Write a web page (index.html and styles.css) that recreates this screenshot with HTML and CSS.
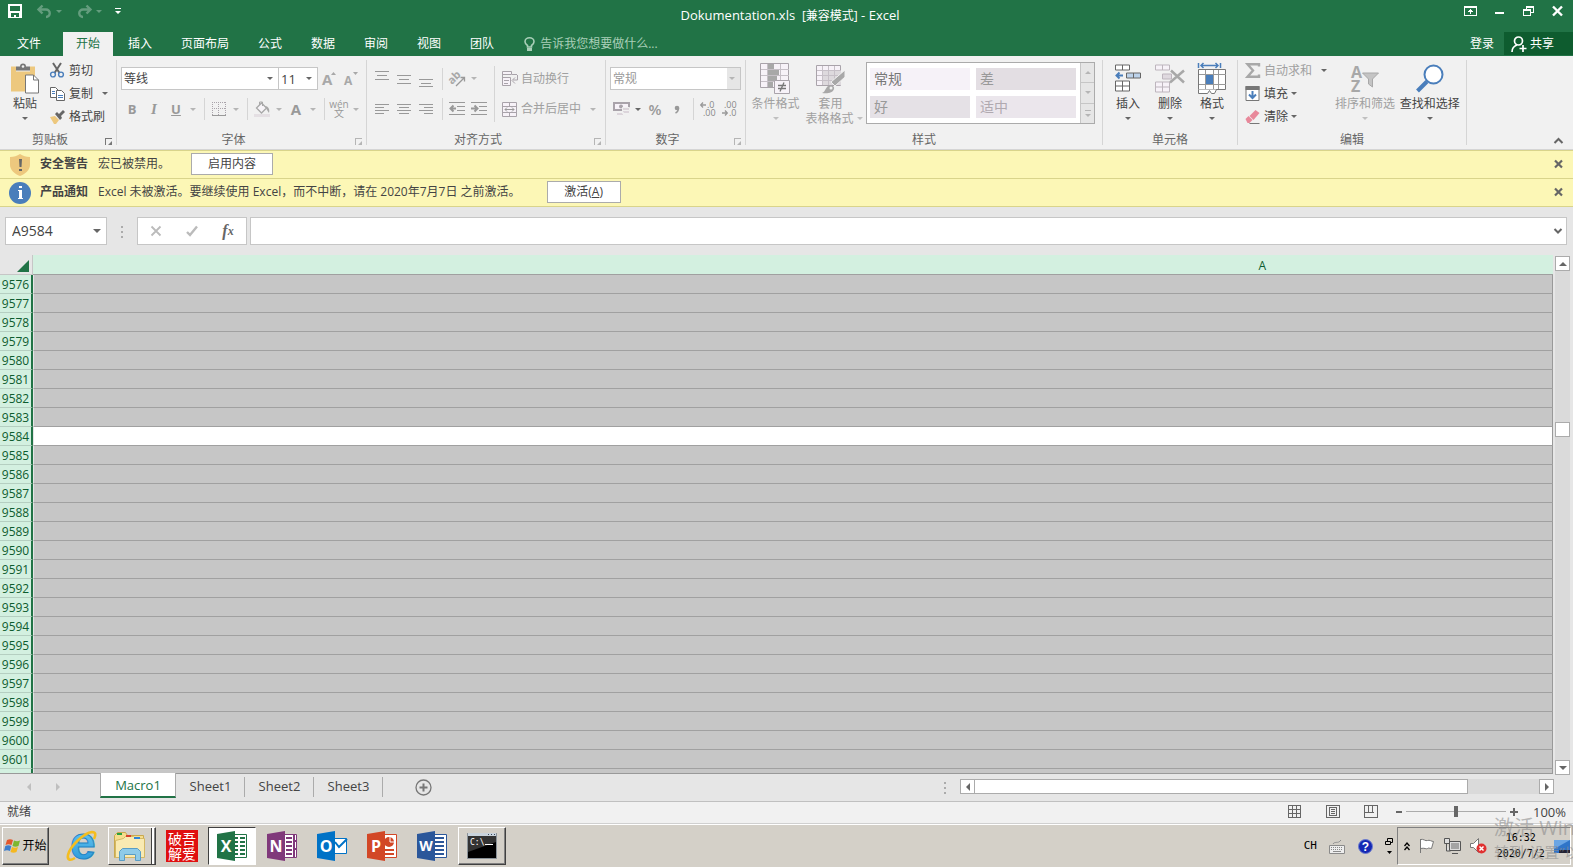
FILE: index.html
```
<!DOCTYPE html>
<html lang="zh-CN">
<head>
    <meta charset="UTF-8">
    <meta name="viewport" content="width=device-width, initial-scale=1.0">
    <title>Dokumentation.xls - Excel</title>
    <link rel="stylesheet" href="styles.css">
</head>
<body>

    <header class="title-bar">
        <div class="quick-access">
            <button class="qa-btn" aria-label="保存">
                <svg width="14" height="14" viewBox="0 0 14 14" shape-rendering="crispEdges"><path fill="#fff" fill-rule="evenodd" d="M0 0h14v14H0zM2 2v5h10V2zM3 9v4h3v-2h2v2h3V9z"/></svg>
            </button>
            <button class="qa-btn faded" aria-label="撤消">
                <svg width="15" height="13" viewBox="0 0 15 13"><path fill="none" stroke="#fff" stroke-width="2.400" d="M2 4.500h7a3.500 3.500 0 0 1 0 7.500M5.500 0.500L1.500 4.500l4 4"/></svg>
                <span class="arrow"></span>
            </button>
            <button class="qa-btn faded" aria-label="恢复">
                <svg width="15" height="13" viewBox="0 0 15 13"><path fill="none" stroke="#fff" stroke-width="2.400" d="M13 4.500H6a3.500 3.500 0 0 0 0 7.500M9.500 0.500l4 4-4 4"/></svg>
                <span class="arrow"></span>
            </button>
            <button class="qa-btn" aria-label="自定义快速访问工具栏">
                <svg width="6" height="6" viewBox="0 0 6 6"><path fill="#fff" d="M0 0h6v1H0zM0 3h6L3 6z"/></svg>
            </button>
        </div>
        <div class="doc-title">Dokumentation.xls&nbsp; <span>[兼容模式]</span> - Excel</div>
        <div class="window-buttons">
            <button aria-label="功能区显示选项"><svg width="13" height="10" viewBox="0 0 13 10" shape-rendering="crispEdges"><path fill="#fff" fill-rule="evenodd" d="M0 0h13v10H0zM1 2v7h11V2z"/><path fill="#fff" d="M6 3h1v5H6zM5 4h3v1H5zM4 5h5v1H4z"/></svg></button>
            <button aria-label="最小化"><svg width="13" height="10"><path fill="#fff" d="M2 6h9v2H2z"/></svg></button>
            <button aria-label="还原"><svg width="11" height="10" viewBox="0 0 11 10" shape-rendering="crispEdges"><path fill="#fff" fill-rule="evenodd" d="M3 0h8v7H8v3H0V3h3zM4 2v1h4v3h2V2zM1 5v4h6V5z"/></svg></button>
            <button aria-label="关闭"><svg width="11" height="10" viewBox="0 0 11 10"><path stroke="#fff" stroke-width="2.400" d="M1 0.500l9 9M10 0.500l-9 9"/></svg></button>
        </div>
    </header>

    <nav class="tabs">
        <button class="tab file">文件</button>
        <button class="tab active">开始</button>
        <button class="tab">插入</button>
        <button class="tab">页面布局</button>
        <button class="tab">公式</button>
        <button class="tab">数据</button>
        <button class="tab">审阅</button>
        <button class="tab">视图</button>
        <button class="tab">团队</button>
        <button class="tell-me">
            <svg width="11" height="15" viewBox="0 0 11 15"><path fill="none" stroke="#a9cfb8" stroke-width="1.600" d="M3.500 10V8.500C2 7.500 1 6.500 1 4.800a4.500 4 0 0 1 9 0C10 6.500 9 7.500 7.500 8.500V10z"/><path fill="#a9cfb8" d="M3 11h5v3H3z"/></svg>
            告诉我您想要做什么...
        </button>
        <button class="sign-in">登录</button>
        <button class="share">
            <svg width="16" height="16" viewBox="0 0 16 16"><g fill="none" stroke="#fff" stroke-width="1.700"><circle cx="7.500" cy="5" r="4"/><path d="M1 16c0-4 2-6 5-7M12 9v7M8.500 12.500h7"/></g></svg>
            共享
        </button>
    </nav>

    <section class="ribbon">
        <div class="group g-clip">
            <div class="group-body">
                <button class="big-btn paste">
                    <svg width="30" height="30" viewBox="0 0 30 30"><path fill="#edc87e" d="M1 3h24v25H1z"/><path fill="#f1f1f1" d="M6 2h14v6H6z"/><path fill="#777" d="M6 3h4a3 3 0 0 1 6 0h4v4H6z"/><circle cx="13" cy="3" r="1.300" fill="#f1f1f1"/><path fill="#fff" stroke="#777" d="M15.500 11.500h8l5 5v13h-13z"/><path fill="none" stroke="#777" d="M23.500 11.500v5h5"/></svg>
                    <span>粘贴</span><span class="arrow"></span>
                </button>
                <div class="stack">
                    <button class="row-btn"><svg width="15" height="15" viewBox="0 0 15 15"><path stroke="#666" stroke-width="2" d="M3 0l6.500 10M11 0L4.500 10"/><g fill="none" stroke="#4a7ebb" stroke-width="1.400"><circle cx="3" cy="11.500" r="2.400"/><circle cx="11" cy="11.500" r="2.400"/></g></svg>剪切</button>
                    <button class="row-btn"><svg width="15" height="14" viewBox="0 0 15 14"><g fill="#fff" stroke="#666"><path d="M.5.500h5l3 3v7h-8z"/><path d="M6.500 3.500h5l3 3v7h-8z"/></g><path stroke="#4a7ebb" d="M2 4.500h3M2 6.500h3M8 8.500h5M8 10.500h5"/></svg>复制<span class="arrow far"></span></button>
                    <button class="row-btn"><svg width="15" height="14" viewBox="0 0 15 14"><path fill="#edc87e" d="M0 7l5-1 4 4-3 4H4z"/><path fill="#666" d="M5 4l2-2 2 2 4-4 2 2-4 4 1 2-2 2z"/></svg>格式刷</button>
                </div>
            </div>
            <div class="group-label">剪贴板<span class="launcher dark"></span></div>
        </div>

        <div class="group g-font">
            <div class="group-body rows">
                <div class="tool-row">
                    <label class="combo font-name"><select aria-label="字体"><option>等线</option></select></label>
                    <label class="combo font-size"><select aria-label="字号"><option>11</option></select></label>
                    <button class="tool" aria-label="增大字号"><svg width="14" height="16" viewBox="0 0 14 16"><text x="0" y="14" class="glyph" font-size="15">A</text><path fill="#a8a8a8" d="M9 4l2.500-3L14 4z"/></svg></button>
                    <button class="tool" aria-label="减小字号"><svg width="14" height="16" viewBox="0 0 14 16"><text x="0" y="14" class="glyph" font-size="12">A</text><path fill="#a8a8a8" d="M9 1l2.500 3L14 1z"/></svg></button>
                </div>
                <div class="tool-row">
                    <button class="tool bold">B</button>
                    <button class="tool italic">I</button>
                    <button class="tool under">U</button>
                    <span class="arrow"></span>
                    <i class="sep"></i>
                    <button class="tool" aria-label="边框"><svg width="14" height="14" viewBox="0 0 14 14"><path fill="none" stroke="#a9a3aa" stroke-dasharray="1 1" d="M0 .5h14M0 6.500h14M.5 0v13M6.500 0v13M13.500 0v13"/><path stroke="#999" d="M0 13.500h14"/></svg></button>
                    <span class="arrow"></span>
                    <i class="sep"></i>
                    <button class="tool" aria-label="填充颜色"><svg width="16" height="16" viewBox="0 0 16 16"><path fill="#e4dfe3" d="M0 13h16v3H0z"/><path fill="#f7f4f8" stroke="#a8a8a8" stroke-width="1.300" d="M2.500 7l5-5 5 5-5 5z"/><path fill="none" stroke="#a8a8a8" d="M5.500 4V1h3v4"/><path fill="#a8a8a8" d="M11 5c3 0 5 3 4 7l-2-3z"/></svg></button>
                    <span class="arrow"></span>
                    <button class="tool letter">A</button>
                    <span class="arrow"></span>
                    <i class="sep"></i>
                    <button class="tool pinyin"><span>wén</span><span>文</span></button>
                    <span class="arrow"></span>
                </div>
            </div>
            <div class="group-label">字体<span class="launcher"></span></div>
        </div>

        <div class="group g-align">
            <div class="group-body">
                <div class="rows align-left">
                    <div class="tool-row">
                        <button class="tool" aria-label="顶端对齐"><svg width="14" height="16"><path stroke="#999" d="M0 .5h14M2 4.500h10M0 8.500h14" /></svg></button>
                        <button class="tool" aria-label="垂直居中"><svg width="14" height="16"><path stroke="#999" d="M0 4.500h14M2 8.500h10M0 12.500h14"/></svg></button>
                        <button class="tool" aria-label="底端对齐"><svg width="14" height="16"><path stroke="#999" d="M0 8.500h14M2 12.500h10M0 15.500h14"/></svg></button>
                        <i class="sep"></i>
                        <button class="tool" aria-label="方向"><svg width="17" height="16" viewBox="0 0 17 16"><text x="0" y="11" class="glyph" font-size="11" transform="rotate(-45 5 9)">ab</text><path fill="none" stroke="#999" stroke-width="1.300" d="M7 15l8-8M11.500 6.500h4v4"/></svg></button>
                        <span class="arrow"></span>
                    </div>
                    <div class="tool-row">
                        <button class="tool" aria-label="左对齐"><svg width="14" height="11"><path stroke="#999" d="M0 .5h14M0 3.500h9M0 6.500h14M0 9.500h9"/></svg></button>
                        <button class="tool" aria-label="居中"><svg width="14" height="11"><path stroke="#999" d="M0 .5h14M2 3.500h10M0 6.500h14M2 9.500h10"/></svg></button>
                        <button class="tool" aria-label="右对齐"><svg width="14" height="11"><path stroke="#999" d="M0 .5h14M5 3.500h9M0 6.500h14M5 9.500h9"/></svg></button>
                        <i class="sep"></i>
                        <button class="tool" aria-label="减少缩进"><svg width="16" height="14"><path stroke="#999" d="M0 .5h16M8 4.500h8M8 8.500h8M0 12.500h16"/><path stroke="#999" stroke-width="2" fill="none" d="M7 6.500H2M4.500 3.500l-3 3 3 3"/></svg></button>
                        <button class="tool" aria-label="增加缩进"><svg width="16" height="14"><path stroke="#999" d="M0 .5h16M8 4.500h8M8 8.500h8M0 12.500h16"/><path stroke="#999" stroke-width="2" fill="none" d="M0 6.500h5M3.500 3.500l3 3-3 3"/></svg></button>
                    </div>
                </div>
                <i class="sep long"></i>
                <div class="rows">
                    <div class="tool-row">
                        <button class="text-tool"><svg width="16" height="15" viewBox="0 0 16 15"><g fill="#f7f2f8" stroke="#a9a3aa"><path d="M.5.500h9v3h-9zM.5 6.500h8v8h-8z"/></g><path fill="none" stroke="#a9a3aa" d="M2 9.500h5M2 12.500h4M10 3.500h5M15.500 4v5H11M13 6.500l-3 3 3 3M.5 3v4"/></svg>自动换行</button>
                    </div>
                    <div class="tool-row">
                        <button class="text-tool"><svg width="16" height="15" viewBox="0 0 16 15"><g fill="#f7f2f8" stroke="#a9a3aa"><path d="M.5.500h14v14H.5zM.5 4.500h14v6H.5zM7.500 0.500v4M7.500 10.500v4"/></g><path fill="none" stroke="#999" d="M3 7.500h9M5 5.500l-2 2 2 2M10 5.500l2 2-2 2"/></svg>合并后居中</button>
                        <span class="arrow merge-arrow"></span>
                    </div>
                </div>
            </div>
            <div class="group-label">对齐方式<span class="launcher"></span></div>
        </div>

        <div class="group g-num">
            <div class="group-body rows">
                <div class="tool-row">
                    <label class="combo num-format"><select aria-label="数字格式" disabled><option>常规</option></select></label>
                </div>
                <div class="tool-row">
                    <button class="tool" aria-label="会计数字格式"><svg width="17" height="16" viewBox="0 0 17 16"><path fill="#f7f2f8" stroke="#a9a3aa" stroke-width="2" d="M1 2h15v7H1z"/><circle cx="8" cy="5.500" r="2" fill="#a9a3aa"/><path fill="#dcd5db" stroke="#f1f1f1" d="M9.500 6.500h7v3h-7zM9.500 9.500h7v3h-7zM3.500 11.500h7v3h-7z"/></svg></button>
                    <span class="arrow black"></span>
                    <button class="tool percent">%</button>
                    <button class="tool" aria-label="千位分隔样式"><svg width="6" height="9" viewBox="0 0 6 9"><circle cx="3" cy="3" r="2.300" fill="#999"/><path fill="none" stroke="#999" stroke-width="1.500" d="M4.500 3c0 3-1 4-3 5"/></svg></button>
                    <i class="sep"></i>
                    <button class="tool" aria-label="增加小数位数"><svg width="16" height="16" viewBox="0 0 16 16"><text x="7" y="7" class="digits">.0</text><text x="3" y="15" class="digits">.00</text><path fill="none" stroke="#999" stroke-width="1.300" d="M6 4H1M3 1.500L.7 4 3 6.500"/></svg></button>
                    <button class="tool" aria-label="减少小数位数"><svg width="16" height="16" viewBox="0 0 16 16"><text x="2" y="7" class="digits">.00</text><text x="7" y="15" class="digits">.0</text><path fill="none" stroke="#999" stroke-width="1.300" d="M0 12h5M3 9.500L5.300 12 3 14.500"/></svg></button>
                </div>
            </div>
            <div class="group-label">数字<span class="launcher"></span></div>
        </div>

        <div class="group g-style">
            <div class="group-body">
                <button class="big-btn off">
                    <svg width="31" height="31" viewBox="0 0 31 31"><path fill="#f7f2f8" stroke="#a9a3aa" d="M.5.500h28v24H.5z"/><path fill="#a8a8a8" d="M8 1h6v6H8zM8 7h11v6H8zM8 13h9v6H8zM8 19h5v5H8z"/><path stroke="#c6c0c7" d="M1 6.500h28M1 12.500h28M1 18.500h28M7.500 1v23M20.500 1v23"/><path fill="#f7f2f8" stroke="#a9a3aa" d="M14.500 17.500h15v13h-15z"/><path stroke="#777" stroke-width="1.300" d="M18 22.500h8M18 25.500h8M24 19.500l-4 9"/></svg>
                    <span>条件格式</span><span class="arrow"></span>
                </button>
                <button class="big-btn off">
                    <svg width="31" height="31" viewBox="0 0 31 31"><path fill="#f7f2f8" stroke="#a9a3aa" d="M1.500 2.500h24v20h-24z"/><path fill="#ddd9dd" d="M8 8h18v14H8z"/><path stroke="#c6c0c7" d="M2 7.500h24M2 12.500h24M2 17.500h24M7.500 3v19M13.500 3v19M19.500 3v19"/><path fill="#a8a8a8" stroke="#f1f1f1" d="M30 7v7L20 23l-4-4z"/><path fill="#a8a8a8" d="M7 30c3-1 3-4 6-7 3-2 7 0 6 3-1 4-7 5-12 4z"/><circle cx="16" cy="25" r="1.500" fill="#f1f1f1"/></svg>
                    <span>套用</span><span class="two-line">表格格式 <span class="arrow"></span></span>
                </button>
                <div class="gallery">
                    <div class="gallery-items">
                        <button class="style-normal">常规</button>
                        <button class="style-bad">差</button>
                        <button class="style-good">好</button>
                        <button class="style-neutral">适中</button>
                    </div>
                    <div class="gallery-nav">
                        <button aria-label="上一行"><span class="arrow up"></span></button>
                        <button aria-label="下一行"><span class="arrow"></span></button>
                        <button class="more" aria-label="其他"><span class="arrow"></span></button>
                    </div>
                </div>
            </div>
            <div class="group-label">样式</div>
        </div>

        <div class="group g-cells">
            <div class="group-body">
                <button class="big-btn">
                    <svg width="28" height="28" viewBox="0 0 28 28"><g fill="#fff" stroke="#666"><path d="M1.500.500h14v5h-14zM8.500 .5v5M1.500 16.500h14v10h-14zM1.500 21.500h14M8.500 16.500v10"/><path fill="#bcd2ea" d="M12.500 8.500h14v5h-14zM19.500 8.500v5"/></g><path fill="none" stroke="#4a7ebb" stroke-width="2" d="M9 11H3M5.500 8L2.500 11l3 3"/></svg>
                    <span>插入</span><span class="arrow"></span>
                </button>
                <button class="big-btn">
                    <svg width="30" height="28" viewBox="0 0 30 28"><g fill="#f7f2f8" stroke="#bdb5bd"><path d="M.5.500h14v5h-14zM7.500 .5v5M.5 17.500h14v10h-14zM.5 22.500h14M7.500 17.500v10"/><path fill="#dfd9df" d="M7.500 9.500h9v5h-9z"/></g><path stroke="#a8a8a8" stroke-width="2.500" d="M15 18L29 6M16 6l13 12"/></svg>
                    <span>删除</span><span class="arrow"></span>
                </button>
                <button class="big-btn">
                    <svg width="28" height="31" viewBox="0 0 28 31"><path fill="none" stroke="#4a7ebb" stroke-width="1.500" d="M.5 0v5M22.500 0v5M3 2.500h17M5.500 0L3 2.500 5.500 5M17.500 0L20 2.500 17.500 5"/><path fill="#fff" stroke="#777" d="M.5 6.500h27v20H.5z"/><path stroke="#999" d="M1 11.500h27M1 21.500h27M7.500 7v19M15.500 7v19M20.500 7v19"/><path fill="#4a7ebb" d="M8 12h7v9H8z"/><path fill="#fff" stroke="#777" d="M.5 26.500v4h9l2-3 2 3h3l2-4"/></svg>
                    <span>格式</span><span class="arrow"></span>
                </button>
            </div>
            <div class="group-label">单元格</div>
        </div>

        <div class="group g-edit">
            <div class="group-body">
                <div class="stack">
                    <button class="row-btn off"><svg width="15" height="15" viewBox="0 0 15 15"><path fill="none" stroke="#a8a8a8" stroke-width="2.400" d="M14 3.500V1.200H2.500L8 7.500l-5.500 6.300H14v-2.300"/></svg>自动求和<span class="arrow dim far"></span></button>
                    <button class="row-btn"><svg width="14" height="15" viewBox="0 0 14 15"><path fill="#fff" stroke="#777" d="M.5.500h13v14H.5z"/><path fill="#777" d="M0 0h14v4H0z"/><path fill="none" stroke="#4a7ebb" stroke-width="2" d="M7 5v7M3.500 8.500L7 12l3.500-3.500"/></svg>填充<span class="arrow"></span></button>
                    <button class="row-btn"><svg width="14" height="14" viewBox="0 0 14 14"><path fill="#e8889a" d="M4 6l6-6 4 3-6 7z"/><path fill="#e8889a" d="M0 9l3-3 4 4-3 3H2z"/><path stroke="#777" d="M4 13.500h10"/></svg>清除<span class="arrow"></span></button>
                </div>
                <button class="big-btn off wide">
                    <svg width="30" height="28" viewBox="0 0 30 28"><text x="1" y="13" class="glyph" font-size="16">A</text><text x="1" y="27" class="glyph" font-size="16">Z</text><path fill="#c4c4c4" stroke="#a8a8a8" d="M12.500 8.500h16l-6 6v8l-4-3v-5z"/></svg>
                    <span>排序和筛选</span><span class="arrow"></span>
                </button>
                <button class="big-btn wide">
                    <svg width="28" height="28" viewBox="0 0 28 28"><circle cx="17.500" cy="10" r="9" fill="#fff" stroke="#4a7ebb" stroke-width="2"/><path stroke="#4a7ebb" stroke-width="4" d="M1.500 26.500l9.500-9.500"/></svg>
                    <span>查找和选择</span><span class="arrow"></span>
                </button>
            </div>
            <div class="group-label">编辑</div>
        </div>
        <button class="collapse" aria-label="折叠功能区"><svg width="9" height="6"><path fill="none" stroke="#666" stroke-width="2" d="M.5 5l4-4 4 4"/></svg></button>
    </section>

    <div class="notice">
        <svg width="20" height="22" viewBox="0 0 20 22"><path fill="#edc87e" d="M10 0c3 2 6 3 10 3v8c0 5-5 9-10 11C5 20 0 16 0 11V3c4 0 7-1 10-3z"/><path fill="#666" d="M9 5h3l-.5 8h-2zM9 15h3v2H9z"/></svg>
        <strong>安全警告</strong>
        <span>宏已被禁用。</span>
        <button class="notice-btn enable">启用内容</button>
        <button class="notice-close" aria-label="关闭"><svg width="9" height="8"><path stroke="#666" stroke-width="2.200" d="M1 .5l7 7M8 .5l-7 7"/></svg></button>
    </div>
    <div class="notice">
        <svg width="22" height="22" viewBox="0 0 22 22"><circle cx="11" cy="11" r="11" fill="#4a7ebb"/><path fill="#fff" d="M10 4h3v2h-3zM9 8h4v8h1v1H9v-1h1V9H9z"/></svg>
        <strong>产品通知</strong>
        <span>Excel 未被激活。要继续使用 Excel，而不中断，请在 2020年7月7日 之前激活。</span>
        <button class="notice-btn">激活(<u>A</u>)</button>
        <button class="notice-close" aria-label="关闭"><svg width="9" height="8"><path stroke="#666" stroke-width="2.200" d="M1 .5l7 7M8 .5l-7 7"/></svg></button>
    </div>

    <div class="formula-bar">
        <label class="combo name-box"><input type="text" value="A9584" aria-label="名称框"></label>
        <i class="dots"></i>
        <div class="fx-box">
            <button aria-label="取消"><svg width="10" height="10"><path stroke="#bbb" stroke-width="1.800" d="M.5.500l9 9M9.500.500l-9 9"/></svg></button>
            <button aria-label="输入"><svg width="12" height="10"><path fill="none" stroke="#bbb" stroke-width="2.400" d="M1 6l3 3 7-8.500"/></svg></button>
            <button class="fx" aria-label="插入函数">f<sub>x</sub></button>
        </div>
        <div class="formula-input">
            <input type="text" aria-label="编辑栏">
            <svg width="8" height="6"><path fill="none" stroke="#666" stroke-width="2" d="M.5 1L4 4.500 7.500 1"/></svg>
        </div>
    </div>

    <main class="sheet">
        <div class="grid">
            <table>
                <thead>
                    <tr><th class="corner"><svg width="12" height="12"><path fill="#217346" d="M12 0v12H0z"/></svg></th><th class="col-head">A</th></tr>
                </thead>
                <tbody id="rows"></tbody>
            </table>
        </div>
        <div class="v-scroll">
            <button aria-label="向上"><span class="arrow up solid"></span></button>
            <div class="v-track"><div class="v-thumb"></div></div>
            <button aria-label="向下"><span class="arrow solid"></span></button>
        </div>
    </main>

    <div class="sheet-bar">
        <div class="sheet-nav"><span class="side prev"></span><span class="side next"></span></div>
        <button class="sheet-tab current">Macro1</button>
        <button class="sheet-tab">Sheet1</button>
        <button class="sheet-tab">Sheet2</button>
        <button class="sheet-tab">Sheet3</button>
        <button class="add-sheet" aria-label="新工作表"><svg width="17" height="17" viewBox="0 0 17 17"><circle cx="8.500" cy="8.500" r="7.500" fill="none" stroke="#777" stroke-width="1.300"/><path stroke="#777" stroke-width="2" d="M8.500 4.500v8M4.500 8.500h8"/></svg></button>
        <i class="dots"></i>
        <div class="h-scroll">
            <button aria-label="向左"><span class="side prev"></span></button>
            <div class="h-track"><div class="h-thumb"></div></div>
            <button aria-label="向右"><span class="side next"></span></button>
        </div>
    </div>

    <footer class="status-bar">
        <span class="ready">就绪</span>
        <button aria-label="普通"><svg width="14" height="14" shape-rendering="crispEdges"><path fill="none" stroke="#666" d="M.5.500h12v12H.5zM4.500.500v12M8.500.500v12M.5 4.500h12M.5 8.500h12"/></svg></button>
        <button aria-label="页面布局"><svg width="14" height="14" shape-rendering="crispEdges"><path fill="none" stroke="#666" d="M.5.500h13v12H.5zM3.500 2.500h7v8h-7zM5 4.500h4M5 6.500h4M5 8.500h4"/></svg></button>
        <button aria-label="分页预览"><svg width="14" height="14" shape-rendering="crispEdges"><path fill="none" stroke="#666" d="M.5.500h13v12H.5zM4.500.500v7M8.500.500v7M.5 7.500h9"/></svg></button>
        <div class="zoom">
            <span class="minus"></span>
            <input type="range" min="0" max="100" value="50" aria-label="显示比例">
            <span class="plus"></span>
        </div>
        <span class="percent-label">100%</span>
    </footer>

    <div class="taskbar">
        <button class="start">
            <svg width="17" height="16" viewBox="0 0 17 16"><path fill="#e2572c" d="M3 2c2-1 4-1 6 0L7.500 7c-2-1-4-1-6 0z"/><path fill="#7db72f" d="M10 2.500c2 1 4 1 6 0L14.500 8c-2 1-4 1-6 0z"/><path fill="#3d7ecc" d="M1.300 8c2-1 4-1 6 0L6 13c-2-1-4-1-6 0z"/><path fill="#f5b81f" d="M8 9c2 1 4 1 6 0l-1.500 5c-2 1-4 1-6 0z"/></svg>
            <span>开始</span>
        </button>
        <button class="task" aria-label="Internet Explorer">
            <svg width="32" height="32" viewBox="0 0 32 32"><defs><linearGradient id="ie" x2="0" y2="1"><stop offset="0" stop-color="#7fd6f8"/><stop offset="1" stop-color="#1b8fd6"/></linearGradient></defs><text x="4" y="29" class="ie-letter">e</text><path fill="none" stroke="#f4bd1f" stroke-width="2.600" d="M9 28c-5 3-8 2-7-3C4 16 18 3 26 2c4 0 4 3 2 7"/></svg>
        </button>
        <button class="task raised double" aria-label="文件资源管理器">
            <svg width="34" height="32" viewBox="0 0 34 32"><path fill="#f5dd8d" stroke="#c9a94e" d="M1.500 5.500l3-3h8l2 3h16v22h-29z"/><path fill="#f9eab2" stroke="#d4b864" d="M2.500 10.500l8-2 2-2h8l2 2h9v19h-29z"/><path fill="#29a03f" d="M4 3h5v2H4z"/><path fill="#d8402c" d="M13 5h5v2h-5z"/><path fill="#2f84d6" d="M21 7h6v2h-6z"/><path fill="#8ecbe9" stroke="#5a9dc4" d="M6.500 30.500v-9l3-3h15l3 3v9h-5v-6h-11v6z"/></svg>
        </button>
        <button class="task" aria-label="吾爱破解"><span class="seal">破吾解爱</span></button>
        <button class="task pressed" aria-label="Excel">
            <svg width="32" height="32" viewBox="0 0 32 32"><path fill="#fff" stroke="#217346" d="M15.500 4.500h15v23h-15z"/><path stroke="#217346" stroke-width="2" d="M18 8h4M24 8h5M18 12h4M24 12h5M18 16h4M24 16h5M18 20h4M24 20h5M18 24h4M24 24h5"/><path fill="#217346" d="M1 4l18-3v30L1 28z"/><text x="10" y="22" class="logo">X</text></svg>
        </button>
        <button class="task" aria-label="OneNote">
            <svg width="32" height="32" viewBox="0 0 32 32"><path fill="#fff" stroke="#80397b" d="M15.500 4.500h15v23h-15z"/><path stroke="#80397b" stroke-width="2" d="M20 8h6M20 12h6M20 16h6M20 20h6M20 24h6M28 5v22M28 11h3M28 19h3"/><path fill="#80397b" d="M1 4l18-3v30L1 28z"/><text x="10" y="22" class="logo">N</text></svg>
        </button>
        <button class="task" aria-label="Outlook">
            <svg width="32" height="32" viewBox="0 0 32 32"><path fill="#fff" stroke="#0072c6" d="M15.500 8.500h15v15h-15z"/><path fill="none" stroke="#0072c6" stroke-width="2" d="M19 12l4 5 8-8"/><path fill="#0072c6" d="M1 4l18-3v30L1 28z"/><text x="10" y="22" class="logo">O</text></svg>
        </button>
        <button class="task" aria-label="PowerPoint">
            <svg width="32" height="32" viewBox="0 0 32 32"><path fill="#fff" stroke="#d24726" d="M15.500 4.500h15v23h-15z"/><circle cx="23" cy="12" r="5" fill="#d24726"/><path stroke="#fff" fill="none" d="M24 7v5h5"/><path stroke="#d24726" stroke-width="2" d="M19 20h9M19 24h9"/><path fill="#d24726" d="M1 4l18-3v30L1 28z"/><text x="10" y="22" class="logo">P</text></svg>
        </button>
        <button class="task" aria-label="Word">
            <svg width="32" height="32" viewBox="0 0 32 32"><path fill="#fff" stroke="#2b579a" d="M15.500 4.500h15v23h-15z"/><path stroke="#2b579a" stroke-width="2" d="M19 8h9M19 12h9M19 16h9M19 20h9M19 24h9"/><path fill="#2b579a" d="M1 4l18-3v30L1 28z"/><text x="10" y="21" class="logo small">W</text></svg>
        </button>
        <button class="task raised" aria-label="命令提示符">
            <svg width="32" height="28" viewBox="0 0 32 28"><path fill="#000" stroke="#8a9299" d="M1.500 1.500h29v25h-29z"/><path fill="#c9d3dc" d="M2 1h28v3H2z"/><path fill="#39485a" d="M22 2h1v1h-1zM25 2h1v1h-1zM28 2h1v1h-1z"/><path fill="#333" d="M2 4h28v6L2 20z"/><text x="4" y="13" font-family="DejaVu Sans Mono" font-size="8" fill="#fff">C:\</text><path fill="#fff" d="M19 12h8v1h-8z"/></svg>
        </button>

        <div class="lang-bar">
            <span>CH</span>
            <svg width="17" height="15" viewBox="0 0 17 15"><path fill="#eee" stroke="#8a8a8a" d="M.5 6.500h15v8H.5zM4 5c2-3 5 0 8-4"/><path stroke="#8a8a8a" stroke-dasharray="1 1" d="M2 8.500h12M2 10.500h12"/><path stroke="#8a8a8a" d="M4 12.500h8"/></svg>
            <svg width="15" height="15" viewBox="0 0 15 15"><circle cx="7.500" cy="7.500" r="7" fill="#1428b4" stroke="#6c7cd0"/><text x="7.500" y="12" text-anchor="middle" font-family="Liberation Sans" font-weight="bold" font-size="12" fill="#fff">?</text></svg>
            <svg width="9" height="17" viewBox="0 0 9 17"><path fill="none" stroke="#000" d="M2.500 3V.5h5v4H6M.5 3.500h5v3h-5z"/><path d="M2 13h5l-2.500 3z"/></svg>
        </div>
        <div class="tray">
            <svg width="6" height="9" viewBox="0 0 6 9"><path fill="none" stroke="#000" stroke-width="1.300" d="M.5 4L3 1l2.500 3M.5 8L3 5l2.500 3"/></svg>
            <svg width="16" height="16" viewBox="0 0 16 16"><path fill="#fff" stroke="#777" d="M1.500 1v14M1.500 1.500c3-1 5 2 7 1s4 1 6 1l-2 7c-2 0-3-1-4 0s-3-1-7 0z"/></svg>
            <svg width="17" height="16" viewBox="0 0 17 16"><path fill="#ddd" stroke="#555" d="M5.500 3.500h11v9h-11zM8 15.500h6M.5.500h5v5h-5zM2.500 6v7h4"/><path fill="#a4a4a4" d="M7 5h8v6H7z"/></svg>
            <svg width="17" height="16" viewBox="0 0 17 16"><path fill="#fff" stroke="#777" d="M.5 5.500h3l5-5v14l-5-5h-3z"/><circle cx="11.500" cy="10.500" r="5" fill="#e03030"/><path stroke="#fff" stroke-width="1.500" d="M9.500 8.500l4 4M13.500 8.500l-4 4"/></svg>
            <div class="clock"><span>16:32</span><span>2020/7/2</span></div>
            <svg width="16" height="13" viewBox="0 0 16 13"><path fill="#2f74c8" d="M0 0h16v13H0z"/><path fill="#6aa5e4" d="M0 0h16L0 9z"/><path fill="#223" d="M5 10h11v3H5z"/></svg>
        </div>
    </div>

    <div class="watermark"><div>激活 Windows</div><p>转到“设置”以激活 Windows。</p></div>

    <script>
        const firstRow = 9576;
        const lastRow = 9602;
        const activeRow = 9584;
        let html = "";

        for (let i = firstRow; i <= lastRow; i++) {
            html += `<tr${i === activeRow ? ' class="active-row"' : ""}><th>${i}</th><td></td></tr>`;
        }
        document.getElementById("rows").innerHTML = html;
    </script>
</body>
</html>
```

FILE: styles.css
```
* {
    box-sizing: border-box;
}
body {
    margin: 0;
    height: 100vh;
    display: flex;
    flex-direction: column;
    overflow: hidden;
    position: relative;
    background-color: #e6e6e6;
    color: #444;
    font-family: "Open Sans", "Noto Sans CJK SC", sans-serif;
    font-size: 12px;
    line-height: 16px;
}
button, input, select {
    font: inherit;
    color: inherit;
    margin: 0;
    padding: 0;
    border: none;
    background: none;
    border-radius: 0;
    outline: none;
}
button {
    display: flex;
    align-items: center;
    justify-content: center;
    white-space: nowrap;
}
svg {
    display: block;
    flex: none;
    overflow: visible;
}
.arrow {
    flex: none;
    width: 12px;
    display: inline-flex;
    justify-content: center;
    color: #b5b5b5;
}
.arrow::after {
    content: "";
    border: 3px solid transparent;
    border-top-color: currentColor;
    border-bottom: none;
}
.arrow.up::after {
    border-top: none;
    border-bottom: 3px solid currentColor;
}
.arrow.black, .arrow.dim, .arrow.solid {
    color: #666;
}
.arrow.solid::after {
    border-width: 4px;
}
.arrow.solid.up::after {
    border-bottom-width: 4px;
}

/* title bar */
.title-bar {
    flex: none;
    height: 32px;
    display: flex;
    justify-content: space-between;
    background-color: #217346;
    color: #fff;
}
.quick-access, .window-buttons {
    display: flex;
    flex: 1;
    height: 22px;
    align-items: center;
}
.quick-access {
    padding-left: 8px;
    gap: 12px;
}
.qa-btn .arrow {
    margin-left: 1px;
    color: #fff;
}
.qa-btn:first-child {
    margin-right: 3px;
}
.qa-btn:last-child {
    margin-left: -2px;
}
.qa-btn.faded {
    opacity: 0.3;
}
.doc-title {
    font-size: 13px;
    line-height: 31px;
}
.doc-title span {
    font-size: 12px;
}
.window-buttons {
    justify-content: flex-end;
    padding-right: 1px;
}
.window-buttons button {
    width: 29px;
}

/* ribbon tabs */
.tabs {
    flex: none;
    height: 24px;
    display: flex;
    gap: 1px;
    background-color: #217346;
    color: #fff;
}
.tab {
    padding: 0 14px;
}
.tab.file {
    width: 62px;
    padding: 0 4px 0 0;
}
.tab.active {
    padding: 0 13px;
    background-color: #f1f1f1;
    color: #217346;
}
.tell-me {
    gap: 5px;
    margin-left: 15px;
    color: #a9cfb8;
}
.sign-in {
    margin-left: auto;
    padding: 0 9px;
}
.share {
    width: 69px;
    height: 23px;
    gap: 3px;
    padding-right: 12px;
    background-color: #0e5c2f;
}

/* ribbon */
.ribbon {
    flex: none;
    height: 94px;
    display: flex;
    background-color: #f1f1f1;
    border-bottom: 1px solid #d5d5d5;
}
.group {
    flex: none;
    margin: 4px 0;
    border-right: 1px solid #d5d5d5;
}
.g-clip {
    width: 117px;
}
.g-font {
    width: 250px;
}
.g-align {
    width: 239px;
}
.g-num {
    width: 140px;
}
.g-style {
    width: 357px;
}
.g-cells {
    width: 135px;
}
.g-edit {
    width: 229px;
}
.group-body {
    height: 70px;
    padding: 0 4px;
    display: flex;
}
.group-label {
    position: relative;
    text-align: center;
    line-height: 20px;
    color: #666;
}
.g-clip .group-label {
    padding-right: 16px;
}
.g-font .group-label, .g-align .group-label, .g-num .group-label {
    padding-right: 16px;
}
.launcher {
    position: absolute;
    right: 4px;
    top: 8px;
    width: 7px;
    height: 7px;
    border: solid #b5b5b5;
    border-width: 1px 0 0 1px;
    color: #b5b5b5;
}
.launcher::after {
    content: "";
    position: absolute;
    right: 0;
    bottom: 0;
    border: 2px solid currentColor;
    border-top-color: transparent;
    border-left-color: transparent;
}
.launcher.dark {
    border-color: #777;
    color: #777;
}
.big-btn {
    flex-direction: column;
    justify-content: flex-start;
    width: 42px;
    padding-top: 3px;
}
.big-btn svg {
    height: 31px;
    margin-bottom: 2px;
}
.big-btn > span {
    height: 15px;
    line-height: 15px;
}
.big-btn .arrow {
    height: 14px;
    align-items: center;
    color: #666;
}
.big-btn.off, .row-btn.off {
    color: #a0a0a0;
}
.big-btn.off .arrow {
    color: #c0c0c0;
}
.big-btn.wide {
    width: 65px;
}
.g-style .big-btn {
    width: 55px;
}
.g-style .group-body {
    padding-left: 2px;
}
.two-line {
    display: flex;
    align-items: center;
    padding-left: 10px;
}
.stack {
    display: flex;
    flex-direction: column;
}
.row-btn {
    height: 23px;
    padding-bottom: 2px;
    justify-content: flex-start;
}
.row-btn svg {
    width: 15px;
    margin: 0 4px 0 3px;
}
.paste + .stack .row-btn svg {
    margin-left: 4px;
}
.row-btn .arrow {
    color: #666;
}
.arrow.far {
    margin-left: 6px;
}
.g-edit .stack {
    width: 91px;
}

.rows {
    display: flex;
    flex-direction: column;
    padding-top: 4px;
}
.tool-row {
    display: flex;
    align-items: center;
    height: 29px;
}
.tool-row + .tool-row {
    height: 32px;
}
.tool {
    flex: none;
    width: 22px;
    height: 22px;
    color: #999;
}
.tool.bold, .tool.italic, .tool.under {
    font-weight: bold;
    font-size: 13px;
}
.tool.italic {
    font-family: "Liberation Serif", serif;
    font-style: italic;
    font-size: 15px;
}
.tool.under {
    text-decoration: underline;
}
.tool.letter {
    font-size: 15px;
    font-weight: bold;
}
.tool.percent {
    font-size: 15px;
    font-weight: 600;
}
.glyph {
    font-family: "Open Sans", sans-serif;
    font-weight: bold;
    fill: #a8a8a8;
}
.digits {
    font-family: "Open Sans", sans-serif;
    font-size: 9px;
    fill: #888;
}
.pinyin {
    flex-direction: column;
    font-size: 10px;
    line-height: 9px;
}
.sep {
    flex: none;
    width: 1px;
    height: 22px;
    margin: 0 3px 0 5px;
    background-color: #d5d5d5;
}
.sep.long {
    height: 56px;
    margin: 6px 7px 0 0;
}
.align-left {
    width: 123px;
}
.text-tool {
    gap: 3px;
    color: #a0a0a0;
}
.merge-arrow {
    margin-left: 6px;
}
.combo {
    flex: none;
    position: relative;
    display: flex;
    height: 23px;
    background-color: #fff;
    border: 1px solid #c6c6c6;
}
.combo::after {
    content: "";
    position: absolute;
    right: 5px;
    top: 9px;
    border: 3px solid transparent;
    border-top-color: #666;
    border-bottom: none;
}
.combo select, .combo input {
    appearance: none;
    width: 100%;
    padding-left: 2px;
    opacity: 1;
}
.font-name {
    width: 158px;
}
.font-size {
    width: 40px;
    margin-left: -1px;
    font-size: 13px;
}
.num-format {
    width: 131px;
    color: #999;
    background-image: linear-gradient(90deg, transparent 116px, #e6e6e6 116px);
}
.num-format::after {
    border-top-color: #b5b5b5;
}
.gallery {
    display: flex;
    width: 229px;
    height: 62px;
    margin: 2px 0 0 8px;
    background-color: #fff;
    border: 1px solid #ababab;
}
.gallery-items {
    flex: 1;
    display: grid;
    grid-template-columns: 100px 100px;
    grid-template-rows: 22px 22px;
    gap: 6px;
    padding: 5px 3px;
    font-size: 14px;
}
.gallery-items button {
    justify-content: flex-start;
    padding: 0 0 1px 4px;
    color: #999;
}
.gallery-items .style-normal {
    background-color: #f6f2f8;
    color: #777;
}
.gallery-items .style-bad {
    background-color: #e3dee3;
}
.gallery-items .style-good {
    background-color: #e5e1e6;
}
.gallery-items .style-neutral {
    background-color: #ebe6ec;
    color: #b0a9b0;
}
.gallery-nav {
    width: 14px;
    display: flex;
    flex-direction: column;
    background-color: #e6e6e6;
    border-left: 1px solid #c6c6c6;
}
.gallery-nav button {
    flex: 1;
}
.gallery-nav button + button {
    border-top: 1px solid #c6c6c6;
}
.gallery-nav .more {
    flex-direction: column;
    gap: 3px;
}
.gallery-nav .more::before {
    content: "";
    width: 6px;
    height: 1px;
    background-color: #b5b5b5;
}
.collapse {
    margin: auto 10px 5px auto;
}

/* yellow message bars */
.notice {
    flex: none;
    height: 28px;
    display: flex;
    align-items: center;
    padding: 0 10px 2px 9px;
    background-color: #fcf7b6;
    border-top: 1px solid #d9d48b;
}
.notice svg {
    width: 22px;
    margin-top: 2px;
}
.notice strong {
    width: 58px;
    margin-left: 9px;
}
.notice-btn {
    width: 74px;
    height: 22px;
    margin-left: 26px;
    background-color: #fff;
    border: 1px solid #ababab;
}
.notice-btn.enable {
    width: 82px;
    margin-left: 21px;
}
.notice-close {
    margin-left: auto;
}
.notice .notice-close svg {
    width: 9px;
    margin: 0;
}

/* formula bar */
.formula-bar {
    flex: none;
    height: 49px;
    display: flex;
    align-items: flex-start;
    padding: 10px 6px 0 5px;
    border-top: 1px solid #d9d48b;
}
.name-box {
    width: 102px;
    height: 28px;
    font-size: 14px;
}
.name-box input {
    padding-left: 6px;
}
.name-box::after {
    top: 11px;
    border-width: 4px;
    border-bottom: none;
}
.dots {
    flex: none;
    width: 2px;
    height: 12px;
    margin: 9px 14px 0;
    background: repeating-linear-gradient(#ababab 0 2px, transparent 2px 5px);
}
.fx-box {
    width: 110px;
    height: 28px;
    display: flex;
    background-color: #fff;
    border: 1px solid #c6c6c6;
}
.fx-box button {
    flex: 1;
}
.fx {
    font-family: "Liberation Serif", serif;
    font-style: italic;
    font-weight: bold;
    font-size: 16px;
    color: #666;
}
.fx sub {
    font-size: 12px;
}
.formula-input {
    flex: 1;
    height: 28px;
    display: flex;
    align-items: center;
    margin-left: 3px;
    padding-right: 4px;
    background-color: #fff;
    border: 1px solid #c6c6c6;
}
.formula-input input {
    flex: 1;
    padding: 0 4px;
}

/* sheet */
.sheet {
    flex: 1;
    min-height: 0;
    display: flex;
}
.grid {
    flex: 1;
    overflow: hidden;
    border-bottom: 1px solid #999;
}
.grid table {
    width: 100%;
    table-layout: fixed;
    border-collapse: separate;
    border-spacing: 0;
}
.grid th, .grid td {
    height: 19px;
    padding: 2px 0 0;
    font-weight: normal;
    border-bottom: 1px solid #a0a0a0;
}
.grid td {
    background-color: #c6c6c6;
    border-left: 1px solid #e6e6e6;
    border-right: 1px solid #999;
}
.grid tbody th {
    background-color: #d3f0e0;
    color: #0e5c2f;
    border-right: 2px solid #217346;
    border-bottom-color: #b5cfc1;
    text-align: center;
}
.grid .corner {
    width: 33px;
    height: 20px;
    border-right: 1px solid #c6c6c6;
    border-bottom-color: #c6c6c6;
}
.corner svg {
    margin: 1px 3px 0 auto;
}
.grid .col-head {
    height: 20px;
    padding-right: 287px;
    text-align: right;
    background-color: #d3f0e0;
    color: #0e5c2f;
}
.active-row td {
    background-color: #fff;
}
.v-scroll {
    width: 15px;
    margin: 1px 3px -1px 2px;
    display: flex;
    flex-direction: column;
}
.v-scroll button, .h-scroll button {
    flex: none;
    width: 15px;
    height: 15px;
    background-color: #fff;
    border: 1px solid #ababab;
}
.v-track {
    flex: 1;
    background-color: #dadada;
    padding-top: 151px;
}
.v-thumb {
    height: 15px;
    background-color: #fff;
    border: 1px solid #ababab;
}

/* sheet tabs */
.sheet-bar {
    flex: none;
    height: 27px;
    display: flex;
    align-items: flex-start;
}
.side {
    border: 4px solid transparent;
}
.side.prev {
    border-left: none;
    border-right-color: #666;
}
.side.next {
    border-right: none;
    border-left-color: #666;
}
.sheet-nav {
    width: 100px;
    height: 26px;
    display: flex;
    align-items: center;
    gap: 25px;
    padding-left: 27px;
    opacity: 0.3;
}
.sheet-tab {
    position: relative;
    width: 69px;
    height: 24px;
    padding-bottom: 1px;
    font-size: 13px;
}
.sheet-tab::after {
    content: "";
    position: absolute;
    right: 0;
    top: 3px;
    height: 20px;
    border-right: 1px solid #ababab;
}
.sheet-tab.current {
    width: 76px;
    margin-top: -1px;
    height: 25px;
    padding: 0;
    background-color: #fff;
    color: #217346;
    border: solid #ababab;
    border-width: 0 1px;
    border-bottom: 2px solid #217346;
}
.sheet-tab.current::after {
    display: none;
}
.add-sheet {
    margin: 5px auto 0 32px;
}
.sheet-bar .dots {
    margin: 8px 14px 0;
}
.h-scroll {
    width: 594px;
    display: flex;
    margin: 5px 19px 0 0;
}
.h-track {
    flex: 1;
    background-color: #dadada;
}
.h-thumb {
    width: 494px;
    height: 15px;
    margin-left: -1px;
    background-color: #fff;
    border: 1px solid #ababab;
}

/* status bar */
.status-bar {
    flex: none;
    height: 23px;
    display: flex;
    align-items: center;
    padding: 0 7px 2px;
    background-color: #f1f1f1;
    border-top: 1px solid #c0c0c0;
    border-bottom: 1px solid #d0d0d0;
}
.ready {
    margin-right: auto;
}
.status-bar button {
    margin-right: 24px;
}
.zoom {
    display: flex;
    align-items: center;
    gap: 4px;
    margin: 0 15px 0 -6px;
}
.minus, .plus {
    position: relative;
    width: 6px;
    height: 2px;
    background-color: #666;
}
.plus {
    width: 8px;
}
.plus::after {
    content: "";
    position: absolute;
    left: 3px;
    top: -3px;
    width: 2px;
    height: 8px;
    background-color: #666;
}
.zoom input {
    appearance: none;
    width: 100px;
    height: 12px;
    background: linear-gradient(#ababab, #ababab) center / 100% 1px no-repeat;
}
.zoom input::-webkit-slider-thumb {
    appearance: none;
    width: 4px;
    height: 11px;
    background-color: #666;
}
.percent-label {
    font-size: 13px;
}

/* taskbar */
.taskbar {
    flex: none;
    height: 43px;
    display: flex;
    align-items: center;
    gap: 2px;
    padding: 0 2px;
    background-color: #d4d0c8;
    border-top: 1px solid #fff;
    color: #000;
}
.start, .raised {
    border: 1px solid;
    border-color: #fff #404040 #404040 #fff;
    box-shadow: inset -1px -1px 0 #808080;
}
.start {
    width: 47px;
    height: 38px;
    margin-right: 7px;
    gap: 1px;
}
.task {
    width: 48px;
    height: 38px;
}
.double {
    box-shadow: inset -1px 0 0 #808080, inset -3px 0 0 #fff, inset -4px 0 0 #404040;
    padding-right: 4px;
}
.pressed {
    background-color: #fff;
    border: 1px solid;
    border-color: #404040 #fff #fff #404040;
}
.logo {
    font-family: "Open Sans", sans-serif;
    font-weight: bold;
    font-size: 16px;
    fill: #fff;
    text-anchor: middle;
}
.logo.small {
    font-size: 14px;
}
.ie-letter {
    font-family: "Liberation Sans", sans-serif;
    font-weight: bold;
    font-size: 46px;
    fill: url(#ie);
    stroke: #2384c4;
}
.seal {
    width: 32px;
    height: 32px;
    padding: 1px 2px;
    background-color: #e01010;
    color: #fff;
    font-size: 14px;
    line-height: 15px;
    white-space: normal;
    word-break: break-all;
}
.lang-bar {
    display: flex;
    align-items: center;
    gap: 12px;
    margin-left: auto;
    margin-right: 1px;
    font-family: "DejaVu Sans Mono", monospace;
    font-size: 11px;
}
.tray {
    width: 174px;
    height: 38px;
    display: flex;
    align-items: center;
    justify-content: space-between;
    padding: 0 0 0 6px;
    border: 1px solid;
    border-color: #808080 #fff #fff #808080;
}
.clock {
    display: flex;
    flex-direction: column;
    align-items: center;
    font-family: "DejaVu Sans Mono", monospace;
    font-size: 10px;
}
.watermark {
    position: absolute;
    right: 0;
    bottom: 4px;
    width: 79px;
    overflow: hidden;
    white-space: nowrap;
    color: rgba(140, 140, 140, 0.6);
    font-size: 20px;
    line-height: 26px;
    pointer-events: none;
}
.watermark p {
    margin: 0;
    font-size: 15px;
    line-height: 22px;
}
```
